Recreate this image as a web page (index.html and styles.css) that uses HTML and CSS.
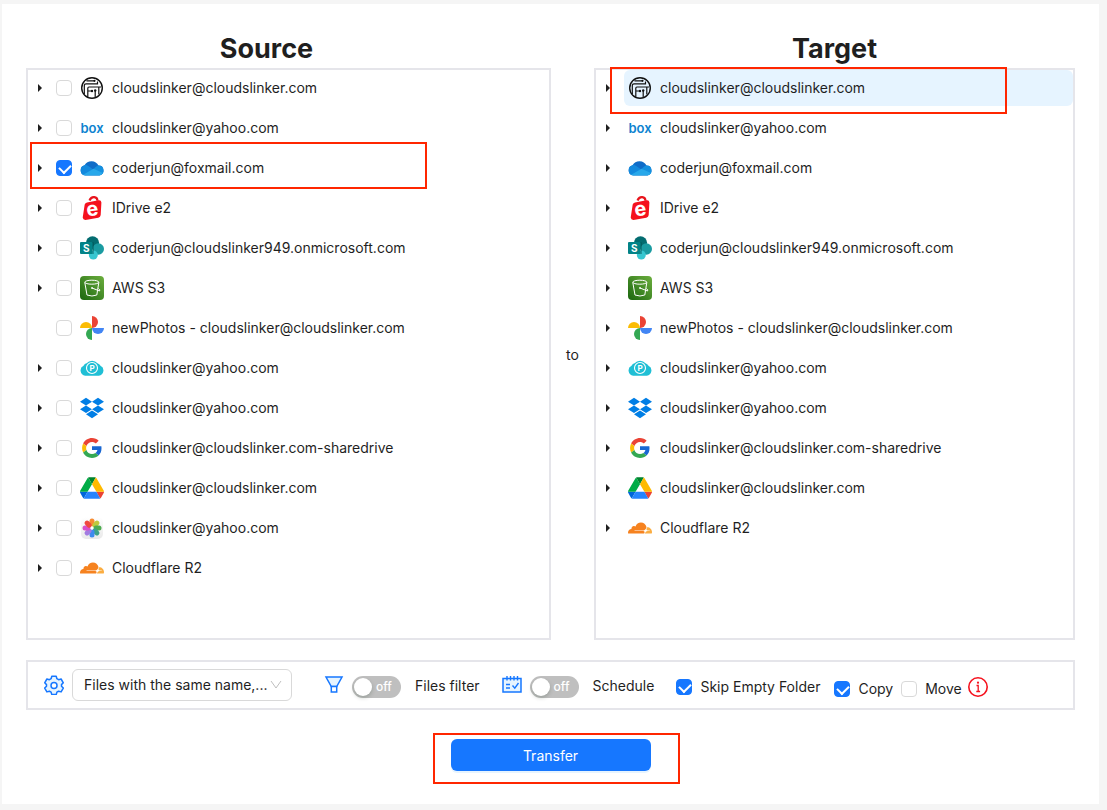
FILE: index.html
```html
<!DOCTYPE html>
<html lang="en">
<head>
    <meta charset="UTF-8">
    <meta name="viewport" content="width=device-width, initial-scale=1.0">
    <title>Transfer</title>
    <link rel="stylesheet" href="styles.css">
</head>
<body>

    <!-- Cloud icons -->
    <svg class="sprite" aria-hidden="true">
        <defs>
            <linearGradient id="gradS3" x1="0" y1="1" x2="1" y2="0">
                <stop offset="0" stop-color="#1b660f"/>
                <stop offset="1" stop-color="#6cae3e"/>
            </linearGradient>
            <linearGradient id="gradTile" x1="0" y1="0" x2="0" y2="1">
                <stop offset="0" stop-color="#ffffff"/>
                <stop offset="1" stop-color="#e9e9e9"/>
            </linearGradient>
            <clipPath id="clipDrive">
                <path d="M5.200 19.500A5.200 5.200 0 0 1 4.600 9.300A7.800 7.800 0 0 1 18.500 9.600A5 5 0 0 1 19.500 19.500Z"/>
            </clipPath>
        </defs>
        <symbol id="circuit" viewBox="0 0 24 24">
            <circle cx="12" cy="12" r="10.300" fill="none" stroke="#111" stroke-width="1.400"/>
            <path d="M6.500 4.800H14.500M4.300 18V9.500Q4.300 7.800 6 7.800H17.500V5.500M7.800 21V12.200Q7.800 11 9 11H21M7.800 15H11.500M15.200 21.500V15M18.800 18.500V11" fill="none" stroke="#111" stroke-width="1.200"/>
            <circle cx="14.500" cy="4.800" r="1.100" fill="#111"/>
            <circle cx="12" cy="15" r="1.200" fill="#111"/>
            <circle cx="15.200" cy="14.500" r="1.200" fill="#111"/>
        </symbol>
        <symbol id="onedrive" viewBox="0 0 24 24">
            <g clip-path="url(#clipDrive)">
                <rect width="24" height="24" fill="#0f6cc8"/>
                <path d="M0 7.500Q5 7 9 10.500L14 14L2 20H0Z" fill="#1389dd"/>
                <path d="M24 8Q17 8.500 13.500 13L24 20Z" fill="#1490df"/>
                <path d="M1 20L13.500 12.700L24 17.500V20Z" fill="#28a8ea"/>
            </g>
        </symbol>
        <symbol id="s3" viewBox="0 0 24 24">
            <rect width="24" height="24" rx="4" fill="url(#gradS3)"/>
            <path d="M4.800 6.500L7 19Q12 21 16.800 19L18.800 6.500M12 12L19.500 15Q20.800 14 18.300 12.500" fill="none" stroke="#fff" stroke-linejoin="round"/>
            <ellipse cx="11.800" cy="6.200" rx="7" ry="2" fill="none" stroke="#fff"/>
            <circle cx="12" cy="12" r=".9" fill="#fff"/>
        </symbol>
        <symbol id="gphotos" viewBox="0 0 24 24">
            <path d="M12 0A6 6 0 0 1 12 12Z" fill="#ea4335"/>
            <path d="M24 12A6 6 0 0 1 12 12Z" fill="#4285f4"/>
            <path d="M12 24A6 6 0 0 1 12 12Z" fill="#34a853"/>
            <path d="M0 12A6 6 0 0 1 12 12Z" fill="#fbbc04"/>
        </symbol>
        <symbol id="dropbox" viewBox="0 0 24 24">
            <path fill="#007ee5" d="M6 1.807L0 5.629l6 3.822 6.001-3.822L6 1.807zM18 1.807l-6 3.822 6 3.822 6-3.822-6-3.822zM0 13.274l6 3.822 6.001-3.822L6 9.452l-6 3.822zM18 9.452l-6 3.822 6 3.822 6-3.822-6-3.822zM6 18.371l6.001 3.822 6-3.822-6-3.822L6 18.371z"/>
        </symbol>
        <symbol id="google" viewBox="-5 -5 58 58">
            <path fill="#ea4335" d="M24 9.500c3.540 0 6.710 1.220 9.210 3.600l6.850-6.850C35.900 2.380 30.470 0 24 0 14.620 0 6.510 5.380 2.560 13.220l7.980 6.190C12.430 13.720 17.740 9.500 24 9.500z"/>
            <path fill="#1967d2" d="M46.980 24.550c0-1.570-.15-3.090-.38-4.550H24v9.020h12.940c-.58 2.960-2.260 5.480-4.780 7.180l7.730 6c4.510-4.180 7.090-10.360 7.090-17.650z"/>
            <path fill="#fbbc05" d="M10.530 28.590c-.48-1.450-.76-2.990-.76-4.590s.27-3.140.76-4.590l-7.980-6.190C.92 16.460 0 20.120 0 24c0 3.880.92 7.540 2.560 10.780l7.970-6.190z"/>
            <path fill="#34a853" d="M24 48c6.480 0 11.930-2.130 15.890-5.810l-7.730-6c-2.150 1.450-4.920 2.300-8.160 2.300-6.260 0-11.570-4.220-13.470-9.910l-7.980 6.190C6.510 42.620 14.620 48 24 48z"/>
        </symbol>
        <symbol id="gdrive" viewBox="0 0 87.300 78">
            <path d="m6.600 66.850 3.850 6.650c.8 1.400 1.950 2.500 3.300 3.300l13.750-23.800h-27.500c0 1.550.4 3.100 1.200 4.500z" fill="#0066da"/>
            <path d="m43.650 25-13.750-23.800c-1.350.8-2.500 1.900-3.300 3.300l-25.400 44a9.060 9.060 0 0 0 -1.200 4.500h27.500z" fill="#00ac47"/>
            <path d="m73.550 76.800c1.350-.8 2.500-1.900 3.300-3.300l1.600-2.750 7.650-13.250c.8-1.400 1.200-2.950 1.200-4.500h-27.502l5.852 11.500z" fill="#ea4335"/>
            <path d="m43.650 25 13.750-23.800c-1.350-.8-2.900-1.200-4.500-1.200h-18.500c-1.600 0-3.150.45-4.500 1.200z" fill="#00832d"/>
            <path d="m59.800 53h-32.300l-13.750 23.800c1.350.8 2.900 1.200 4.500 1.200h50.800c1.600 0 3.150-.45 4.500-1.200z" fill="#2684fc"/>
            <path d="m73.400 26.500-12.700-22c-.8-1.400-1.950-2.500-3.300-3.300l-13.750 23.800 16.150 28h27.450c0-1.550-.4-3.100-1.200-4.500z" fill="#ffba00"/>
        </symbol>
        <symbol id="aphotos" viewBox="0 0 24 24">
            <rect x="1" y="1" width="22" height="22" rx="5" fill="url(#gradTile)"/>
            <g opacity=".9">
                <rect x="9.500" y="2.500" width="5" height="8" rx="2.500" fill="#f7801d"/>
                <rect x="9.500" y="2.500" width="5" height="8" rx="2.500" fill="#b9c42b" transform="rotate(45 12 12)"/>
                <rect x="9.500" y="2.500" width="5" height="8" rx="2.500" fill="#3da540" transform="rotate(90 12 12)"/>
                <rect x="9.500" y="2.500" width="5" height="8" rx="2.500" fill="#2a9a80" transform="rotate(135 12 12)"/>
                <rect x="9.500" y="2.500" width="5" height="8" rx="2.500" fill="#2b80f0" transform="rotate(180 12 12)"/>
                <rect x="9.500" y="2.500" width="5" height="8" rx="2.500" fill="#9a70e0" transform="rotate(225 12 12)"/>
                <rect x="9.500" y="2.500" width="5" height="8" rx="2.500" fill="#d63fc4" transform="rotate(270 12 12)"/>
                <rect x="9.500" y="2.500" width="5" height="8" rx="2.500" fill="#f0352c" transform="rotate(315 12 12)"/>
            </g>
            <circle cx="12" cy="12" r="1.500" fill="#fff"/>
        </symbol>
        <symbol id="cloudflare" viewBox="0 0 24 24">
            <path fill="#f6821f" d="M16.5088 16.8447c.1475-.5068.0908-.9707-.1553-1.3154-.2246-.3164-.6045-.499-1.0615-.5205l-8.6592-.1123a.1559.1559 0 0 1-.1333-.0713c-.0283-.042-.0351-.0986-.021-.1553.0278-.084.1123-.1484.2036-.1562l8.7359-.1123c1.0351-.0489 2.1601-.8868 2.5537-1.9136l.499-1.3013c.0215-.0561.0293-.1128.0147-.168-.5625-2.5463-2.835-4.4453-5.5499-4.4453-2.5039 0-4.6284 1.6177-5.3876 3.8614-.4927-.3658-1.1187-.5625-1.794-.499-1.2026.119-2.1665 1.083-2.2861 2.2856-.0283.31-.0069.6128.0635.894C1.5683 13.171 0 14.7754 0 16.752c0 .1748.0142.3515.0352.5273.0141.083.0844.1475.1689.1475h15.9814c.0909 0 .1758-.0645.2032-.1553l.12-.4268z"/>
            <path fill="#fbad41" d="M19.2656 11.2813c-.0771 0-.1611 0-.2383.0112-.0566 0-.1054.0415-.127.0976l-.3378 1.1744c-.1475.5068-.0918.9707.1543 1.3164.2256.3164.6055.498 1.0625.5195l1.8437.1133c.0557 0 .1055.0263.1329.0703.0283.043.0351.1074.0214.1562-.0283.084-.1132.1485-.204.1553l-1.921.1123c-1.041.0488-2.1582.8867-2.5527 1.914l-.1406.3585c-.0283.0713.0215.1416.0986.1416h6.5977c.0771 0 .1474-.0489.169-.126.1122-.4082.1757-.837.1757-1.2803 0-2.6025-2.125-4.727-4.7344-4.727z"/>
        </symbol>
    </svg>

    <!-- Cloud icons with lettering -->
    <svg class="lettered" aria-hidden="true">
        <symbol id="box" viewBox="0 0 24 24">
            <text x="12" y="17" text-anchor="middle" class="box-word">box</text>
        </symbol>
        <symbol id="idrive" viewBox="0 0 24 24">
            <path d="M9.500 4.500Q11 .8 14.300 1.200Q17.300 1.500 17.500 4.700" fill="none" stroke="#e8141c" stroke-width="2.200"/>
            <path d="M7 6.400L18.500 4.200Q21.200 3.800 21.400 6.500L20.700 19Q20.500 21.300 18.300 21.700L5.500 23.900Q3 24 2.700 21.500L4.700 8.500Q5.200 6.700 7 6.400Z" fill="#f5111d"/>
            <text x="12.300" y="19.700" text-anchor="middle" transform="rotate(-8 12 14)" class="e-mark">e</text>
        </symbol>
        <symbol id="sharepoint" viewBox="0 0 24 24">
            <circle cx="12.500" cy="6.800" r="6.600" fill="#036c70"/>
            <circle cx="18.300" cy="13" r="5.700" fill="#1a9ba1"/>
            <circle cx="13.300" cy="19" r="4.500" fill="#37c6d0"/>
            <path d="M7 6H12.800Q14 6 14 7.200V18H8.900Q7.200 16 7 13Z" fill="#02484b" opacity=".4"/>
            <rect y="6" width="12.500" height="12" rx="1" fill="#038387"/>
            <text x="6.200" y="15.700" text-anchor="middle" class="s-mark">S</text>
        </symbol>
        <symbol id="pcloud" viewBox="0 0 24 24">
            <path d="M5.200 19.700A5.300 5.300 0 0 1 3.500 9.700A5 5 0 0 1 6.600 7.300A7 7 0 0 1 17.500 7.300A5 5 0 0 1 20.500 9.700A5.300 5.300 0 0 1 18.800 19.700Z" fill="#20bfd5"/>
            <circle cx="12" cy="12" r="5.500" fill="none" stroke="#fff" stroke-width="1.100"/>
            <text x="12.200" y="15" text-anchor="middle" class="p-mark">P</text>
        </symbol>
    </svg>

    <main class="page">
        <div class="panels">
            <!-- Source -->
            <section class="panel">
                <h1 class="source-title">Source</h1>
                <ul class="tree">
                    <li class="row"><button class="caret" aria-label="Expand"></button><input type="checkbox" id="s1"><label class="node" for="s1"><svg class="logo"><use href="#circuit"/></svg>cloudslinker@cloudslinker.com</label></li>
                    <li class="row"><button class="caret" aria-label="Expand"></button><input type="checkbox" id="s2"><label class="node" for="s2"><svg class="logo"><use href="#box"/></svg>cloudslinker@yahoo.com</label></li>
                    <li class="row"><button class="caret" aria-label="Expand"></button><input type="checkbox" id="s3c" checked><label class="node" for="s3c"><svg class="logo"><use href="#onedrive"/></svg>coderjun@foxmail.com</label><span class="mark mark-source"></span></li>
                    <li class="row"><button class="caret" aria-label="Expand"></button><input type="checkbox" id="s4"><label class="node" for="s4"><svg class="logo"><use href="#idrive"/></svg>IDrive e2</label></li>
                    <li class="row"><button class="caret" aria-label="Expand"></button><input type="checkbox" id="s5"><label class="node" for="s5"><svg class="logo"><use href="#sharepoint"/></svg>coderjun@cloudslinker949.onmicrosoft.com</label></li>
                    <li class="row"><button class="caret" aria-label="Expand"></button><input type="checkbox" id="s6"><label class="node" for="s6"><svg class="logo"><use href="#s3"/></svg>AWS S3</label></li>
                    <li class="row"><span class="no-caret"></span><input type="checkbox" id="s7"><label class="node" for="s7"><svg class="logo"><use href="#gphotos"/></svg>newPhotos - cloudslinker@cloudslinker.com</label></li>
                    <li class="row"><button class="caret" aria-label="Expand"></button><input type="checkbox" id="s8"><label class="node" for="s8"><svg class="logo"><use href="#pcloud"/></svg>cloudslinker@yahoo.com</label></li>
                    <li class="row"><button class="caret" aria-label="Expand"></button><input type="checkbox" id="s9"><label class="node" for="s9"><svg class="logo"><use href="#dropbox"/></svg>cloudslinker@yahoo.com</label></li>
                    <li class="row"><button class="caret" aria-label="Expand"></button><input type="checkbox" id="s10"><label class="node" for="s10"><svg class="logo"><use href="#google"/></svg>cloudslinker@cloudslinker.com-sharedrive</label></li>
                    <li class="row"><button class="caret" aria-label="Expand"></button><input type="checkbox" id="s11"><label class="node" for="s11"><svg class="logo"><use href="#gdrive"/></svg>cloudslinker@cloudslinker.com</label></li>
                    <li class="row"><button class="caret" aria-label="Expand"></button><input type="checkbox" id="s12"><label class="node" for="s12"><svg class="logo"><use href="#aphotos"/></svg>cloudslinker@yahoo.com</label></li>
                    <li class="row"><button class="caret" aria-label="Expand"></button><input type="checkbox" id="s13"><label class="node" for="s13"><svg class="logo"><use href="#cloudflare"/></svg>Cloudflare R2</label></li>
                </ul>
            </section>

            <div class="to">to</div>

            <!-- Target -->
            <section class="panel">
                <h1>Target</h1>
                <ul class="tree">
                    <li class="row"><button class="caret" aria-label="Expand"></button><button class="node selected"><svg class="logo"><use href="#circuit"/></svg>cloudslinker@cloudslinker.com</button><span class="mark mark-target"></span></li>
                    <li class="row"><button class="caret" aria-label="Expand"></button><button class="node"><svg class="logo"><use href="#box"/></svg>cloudslinker@yahoo.com</button></li>
                    <li class="row"><button class="caret" aria-label="Expand"></button><button class="node"><svg class="logo"><use href="#onedrive"/></svg>coderjun@foxmail.com</button></li>
                    <li class="row"><button class="caret" aria-label="Expand"></button><button class="node"><svg class="logo"><use href="#idrive"/></svg>IDrive e2</button></li>
                    <li class="row"><button class="caret" aria-label="Expand"></button><button class="node"><svg class="logo"><use href="#sharepoint"/></svg>coderjun@cloudslinker949.onmicrosoft.com</button></li>
                    <li class="row"><button class="caret" aria-label="Expand"></button><button class="node"><svg class="logo"><use href="#s3"/></svg>AWS S3</button></li>
                    <li class="row"><button class="caret" aria-label="Expand"></button><button class="node"><svg class="logo"><use href="#gphotos"/></svg>newPhotos - cloudslinker@cloudslinker.com</button></li>
                    <li class="row"><button class="caret" aria-label="Expand"></button><button class="node"><svg class="logo"><use href="#pcloud"/></svg>cloudslinker@yahoo.com</button></li>
                    <li class="row"><button class="caret" aria-label="Expand"></button><button class="node"><svg class="logo"><use href="#dropbox"/></svg>cloudslinker@yahoo.com</button></li>
                    <li class="row"><button class="caret" aria-label="Expand"></button><button class="node"><svg class="logo"><use href="#google"/></svg>cloudslinker@cloudslinker.com-sharedrive</button></li>
                    <li class="row"><button class="caret" aria-label="Expand"></button><button class="node"><svg class="logo"><use href="#gdrive"/></svg>cloudslinker@cloudslinker.com</button></li>
                    <li class="row"><button class="caret" aria-label="Expand"></button><button class="node"><svg class="logo"><use href="#cloudflare"/></svg>Cloudflare R2</button></li>
                </ul>
            </section>
        </div>

        <!-- Options -->
        <div class="toolbar">
            <div class="group rule">
                <svg class="icon" viewBox="0 0 20 20">
                    <path d="M7.800 1.200h4.400l.7 2.500 1.700 1 2.500-.7 2.200 3.800-1.800 1.800v1.600l1.800 1.900-2.200 3.800-2.500-.7-1.700 1-.7 2.400H7.800l-.7-2.400-1.700-1-2.500.7L.7 13.100l1.800-1.900V9.600L.7 7.800 2.900 4l2.500.7 1.700-1z" fill="#e6f4ff" stroke="#1677ff" stroke-width="1.500" stroke-linejoin="round"/>
                    <circle cx="10" cy="10.400" r="3" fill="#fff" stroke="#1677ff" stroke-width="1.500"/>
                </svg>
                <div class="select">
                    <select aria-label="Conflict rule">
                        <option>Files with the same name,...</option>
                    </select>
                    <svg class="arrow" viewBox="0 0 12 12"><path d="M1 2l5 7 5-7" fill="none" stroke="#bfbfbf"/></svg>
                </div>
            </div>

            <div class="group filter">
                <svg class="icon" viewBox="0 0 20 20">
                    <path d="M2 2h16l-5.300 9.500H7.300z" fill="#e6f4ff" stroke="#1677ff" stroke-width="1.500"/>
                    <path d="M7.300 11.500h5.400V17H7.300z" fill="#fff" stroke="#1677ff" stroke-width="1.500"/>
                </svg>
                <label class="switch"><input type="checkbox" role="switch" id="filter"><span>off</span></label>
                <label for="filter" class="caption">Files filter</label>
            </div>

            <div class="group schedule">
                <svg class="icon" viewBox="0 0 20 20">
                    <path d="M1 3.500h18V17H1z" fill="#e6f4ff" stroke="#1677ff" stroke-width="1.500"/>
                    <path d="M5 1v4.500M8.500 1v4.500M12 1v4.500M15.500 1v4.500M4 9.500h4M4 13h4M10.500 10.500l2.300 2.700L16.500 8" fill="none" stroke="#1677ff" stroke-width="1.400"/>
                </svg>
                <label class="switch"><input type="checkbox" role="switch" id="schedule"><span>off</span></label>
                <label for="schedule" class="caption">Schedule</label>
            </div>

            <div class="group skip">
                <label class="check"><input type="checkbox" checked>Skip Empty Folder</label>
            </div>

            <div class="group mode">
                <label class="check"><input type="checkbox" checked>Copy</label>
                <label class="check"><input type="checkbox">Move</label>
            </div>
            <div class="group info">
                <svg class="icon" viewBox="0 0 20 20">
                    <circle cx="10" cy="10" r="9.200" fill="#fff" stroke="#f5111d" stroke-width="1.600"/>
                    <path d="M8.500 8.500h1.700v6M8.300 14.500h3.800" fill="none" stroke="#f5111d" stroke-width="1.300"/>
                    <circle cx="10" cy="5.700" r="1.100" fill="#f5111d"/>
                </svg>
            </div>
        </div>

        <div class="actions">
            <div class="transfer-wrap">
                <button class="transfer">Transfer</button>
                <span class="mark mark-transfer"></span>
            </div>
        </div>
    </main>

</body>
</html>
```

FILE: styles.css
```css
* {
    box-sizing: border-box;
}

body {
    margin: 0;
    padding: 4px 8px 6px 2px;
    background-color: #f5f5f5;
    color: #1f1f1f;
    font-family: Inter, "Liberation Sans", sans-serif;
    font-size: 14px;
    line-height: 22px;
}

button, select, input {
    font: inherit;
    color: inherit;
    margin: 0;
}

.sprite {
    position: absolute;
    width: 0;
    height: 0;
}

.lettered {
    display: none;
}

.page {
    display: flex;
    flex-direction: column;
    min-height: calc(100vh - 10px);
    padding: 28px 24px 33px;
    background-color: #fff;
}

/* Source / target */
.panels {
    flex: 1;
    display: grid;
    grid-template-columns: 525fr 43px 481fr;
}

.panel {
    display: flex;
    flex-direction: column;
}

h1 {
    margin: 0;
    padding-bottom: 2px;
    font-size: 27px;
    line-height: 34px;
    font-weight: 700;
    text-align: center;
}

.source-title {
    padding-right: 44px;
}

.to {
    align-self: center;
    text-align: center;
    padding-top: 38px;
}

.tree {
    flex: 1;
    margin: 0;
    padding: 0;
    border: 2px solid #e5e5ea;
    list-style: none;
}

.row {
    position: relative;
    display: flex;
    align-items: center;
    gap: 4px;
    height: 36px;
    margin-bottom: 4px;
}

.caret, .no-caret {
    width: 24px;
    height: 24px;
    padding: 0;
    border: none;
    background: none;
}

.caret::before {
    content: "";
    display: block;
    width: 0;
    margin: 0 auto;
    border-left: 4px solid #1f1f1f;
    border-top: 4px solid transparent;
    border-bottom: 4px solid transparent;
}

.node {
    flex: 1;
    display: flex;
    align-items: center;
    gap: 8px;
    height: 36px;
    padding: 0 4px;
    border: none;
    border-radius: 6px;
    background: none;
    text-align: left;
    white-space: nowrap;
}

.selected {
    background-color: #e6f4ff;
}

.logo {
    width: 24px;
    height: 24px;
}

.box-word {
    font: 600 13px Inter, sans-serif;
    fill: #0d83d0;
}

.e-mark {
    font: bold 20px Inter, sans-serif;
    fill: #fff;
}

.s-mark {
    font: bold 10px Inter, sans-serif;
    fill: #fff;
}

.p-mark {
    font: bold 8px Inter, sans-serif;
    fill: #fff;
}

/* Checkbox */
input[type="checkbox"] {
    appearance: none;
    flex: none;
    width: 16px;
    height: 16px;
    border: 1px solid #d9d9d9;
    border-radius: 4px;
    background-color: #fff;
}

input[type="checkbox"]:checked {
    border-color: #1677ff;
    background-color: #1677ff;
}

input[type="checkbox"]:checked::after {
    content: "";
    display: block;
    width: 6px;
    height: 9px;
    margin: 1px 0 0 4px;
    border: solid #fff;
    border-width: 0 2px 2px 0;
    transform: rotate(45deg);
}

/* Red frames */
.mark {
    position: absolute;
    width: 397px;
    height: 47px;
    border: 2px solid #ff2600;
    pointer-events: none;
}

.mark-source {
    left: 2px;
    top: -8px;
}

.mark-target {
    left: 14px;
    top: -3px;
}

.mark-transfer {
    left: -18px;
    top: -6px;
    width: 247px;
    height: 51px;
}

/* Options */
.toolbar {
    display: flex;
    align-items: center;
    height: 50px;
    margin-top: 20px;
    padding: 0 16px;
    border: 2px solid #e5e5ea;
    white-space: nowrap;
}

.group {
    display: flex;
    align-items: center;
    gap: 8px;
}

.icon {
    flex: none;
    width: 20px;
    height: 20px;
}

.filter {
    margin-left: 32px;
}

.schedule,
.skip {
    margin-left: 22px;
}

.skip {
    padding-top: 4px;
}

.mode {
    margin-left: 14px;
    padding-top: 8px;
}

.info {
    margin-left: 6px;
    padding-top: 4px;
}

.select {
    position: relative;
    width: 220px;
}

.select select {
    appearance: none;
    width: 100%;
    height: 32px;
    padding: 0 24px 0 11px;
    border: 1px solid #d9d9d9;
    border-radius: 6px;
    background-color: #fff;
}

.arrow {
    position: absolute;
    right: 10px;
    top: 10px;
    width: 12px;
    height: 12px;
    pointer-events: none;
}

.switch {
    display: flex;
    align-items: center;
    gap: 4px;
    width: 49px;
    height: 22px;
    margin-top: 4px;
    padding: 0 2px;
    border-radius: 11px;
    background-color: #bfbfbf;
    color: #fff;
    font-size: 12px;
    font-weight: 500;
}

.switch input[type="checkbox"] {
    width: 18px;
    height: 18px;
    border: none;
    border-radius: 50%;
    box-shadow: 0 2px 4px rgba(0, 35, 11, 0.2);
}

.caption {
    margin-left: 6px;
    padding-top: 2px;
}

.check {
    display: flex;
    align-items: center;
    gap: 8px;
}

/* Transfer button */
.actions {
    display: flex;
    justify-content: center;
    margin-top: 29px;
}

.transfer-wrap {
    position: relative;
}

.transfer {
    display: block;
    width: 200px;
    height: 32px;
    padding: 2px 0 0;
    border: none;
    border-radius: 6px;
    background-color: #1677ff;
    color: #fff;
    box-shadow: 0 2px 0 rgba(5, 145, 255, 0.1);
}
```
